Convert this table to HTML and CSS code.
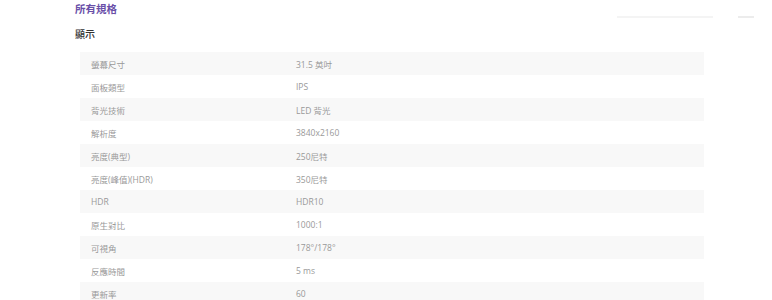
FILE: index.html
```html
<!DOCTYPE html>
<html lang="zh-Hant">
<head>
<meta charset="utf-8">
<title>所有規格</title>
<link rel="stylesheet" href="styles.css">
</head>
<body>
<div class="page">
  <div class="topbar">
    <h2 class="title">所有規格</h2>
    <div class="fades">
      <span class="fade-long"></span>
      <span class="fade-short"></span>
    </div>
  </div>
  <h3 class="section">顯示</h3>
  <div class="specs">
    <div class="row"><span class="label">螢幕尺寸</span><span class="value">31.5 英吋</span></div>
    <div class="row"><span class="label">面板類型</span><span class="value">IPS</span></div>
    <div class="row"><span class="label">背光技術</span><span class="value">LED 背光</span></div>
    <div class="row"><span class="label">解析度</span><span class="value">3840x2160</span></div>
    <div class="row"><span class="label">亮度(典型)</span><span class="value">250尼特</span></div>
    <div class="row"><span class="label">亮度(峰值)(HDR)</span><span class="value">350尼特</span></div>
    <div class="row"><span class="label">HDR</span><span class="value">HDR10</span></div>
    <div class="row"><span class="label">原生對比</span><span class="value">1000:1</span></div>
    <div class="row"><span class="label">可視角</span><span class="value">178°/178°</span></div>
    <div class="row"><span class="label">反應時間</span><span class="value">5 ms</span></div>
    <div class="row"><span class="label">更新率</span><span class="value">60</span></div>
  </div>
</div>
</body>
</html>
```

FILE: styles.css
```css
html, body {
  margin: 0;
  padding: 0;
  background: #ffffff;
}
body {
  font-family: "Noto Sans CJK TC", "Noto Sans", sans-serif;
}
.page {
  padding: 0 0 0 74px;
  width: 680px;
}
.topbar {
  display: flex;
  align-items: flex-start;
  height: 22px;
}
.title {
  margin: 0;
  font-size: 10.5px;
  line-height: 18px;
  font-weight: 600;
  color: #6a4fa8;
  padding-left: 1px;
}
.fades {
  margin-left: auto;
  display: flex;
  gap: 25px;
  padding-top: 16px;
}
.fade-long {
  display: block;
  width: 96px;
  height: 2px;
  background: #f4f4f4;
}
.fade-short {
  display: block;
  width: 16px;
  height: 2px;
  background: #ececec;
}
.section {
  margin: 0;
  font-size: 10px;
  line-height: 24px;
  font-weight: 500;
  color: #333333;
  padding-left: 1px;
  height: 30px;
}
.specs {
  margin-left: 6px;
  width: 624px;
}
.row {
  display: flex;
  height: 23px;
  align-items: center;
  font-size: 8.5px;
  color: #999999;
  font-family: "Open Sans", "Noto Sans CJK TC", sans-serif;
}
.row:nth-child(odd) {
  background: #f8f8f8;
}
.label {
  width: 205px;
  padding-left: 11px;
}
.value {
  flex: 1;
}
```
